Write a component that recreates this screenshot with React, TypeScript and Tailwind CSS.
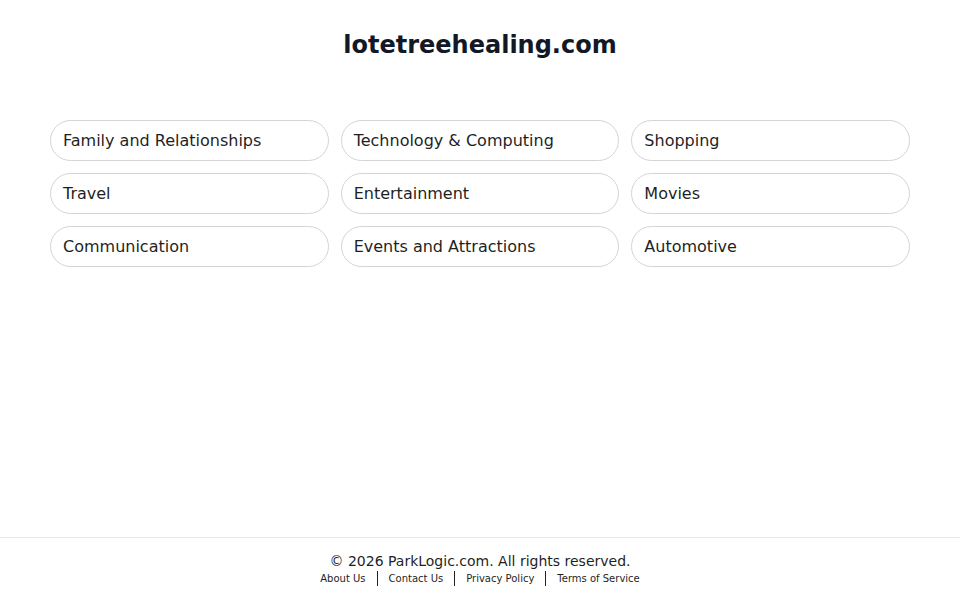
import React from "react";

const items = [
  "Family and Relationships",
  "Technology & Computing",
  "Shopping",
  "Travel",
  "Entertainment",
  "Movies",
  "Communication",
  "Events and Attractions",
  "Automotive",
];

export default function App() {
  return (
    <div
      className="min-h-screen flex flex-col bg-white text-[#1f2937]"
      style={{ fontFamily: '"DejaVu Sans", sans-serif' }}
    >
      <main className="flex-1 px-[50px]">
        <h1 className="text-center text-[24px] leading-[32px] font-bold text-[#111827] pt-[29px]">
          lotetreehealing.com
        </h1>
        <div className="grid grid-cols-3 gap-[12px] mt-[59px]">
          {items.map((t) => (
            <a
              key={t}
              href="#"
              className="h-[41px] flex items-center px-[12px] rounded-full border border-[#d4d4d8] text-[16px] text-[#1f1f1f]"
            >
              {t}
            </a>
          ))}
        </div>
      </main>
      <footer className="h-[63px] border-t border-[#e5e7eb] flex flex-col items-center pt-[15px]">
        <div className="text-[14px] leading-[17px] text-[#1f1f1f]">
          © 2026 ParkLogic.com. All rights reserved.
        </div>
        <div className="flex items-center gap-[11px] text-[10px] leading-[14px] text-[#1f1f1f] mt-[1px]">
          <a href="#">About Us</a>
          <span className="w-px h-[15px] bg-[#222]" />
          <a href="#">Contact Us</a>
          <span className="w-px h-[15px] bg-[#222]" />
          <a href="#">Privacy Policy</a>
          <span className="w-px h-[15px] bg-[#222]" />
          <a href="#">Terms of Service</a>
        </div>
      </footer>
    </div>
  );
}
